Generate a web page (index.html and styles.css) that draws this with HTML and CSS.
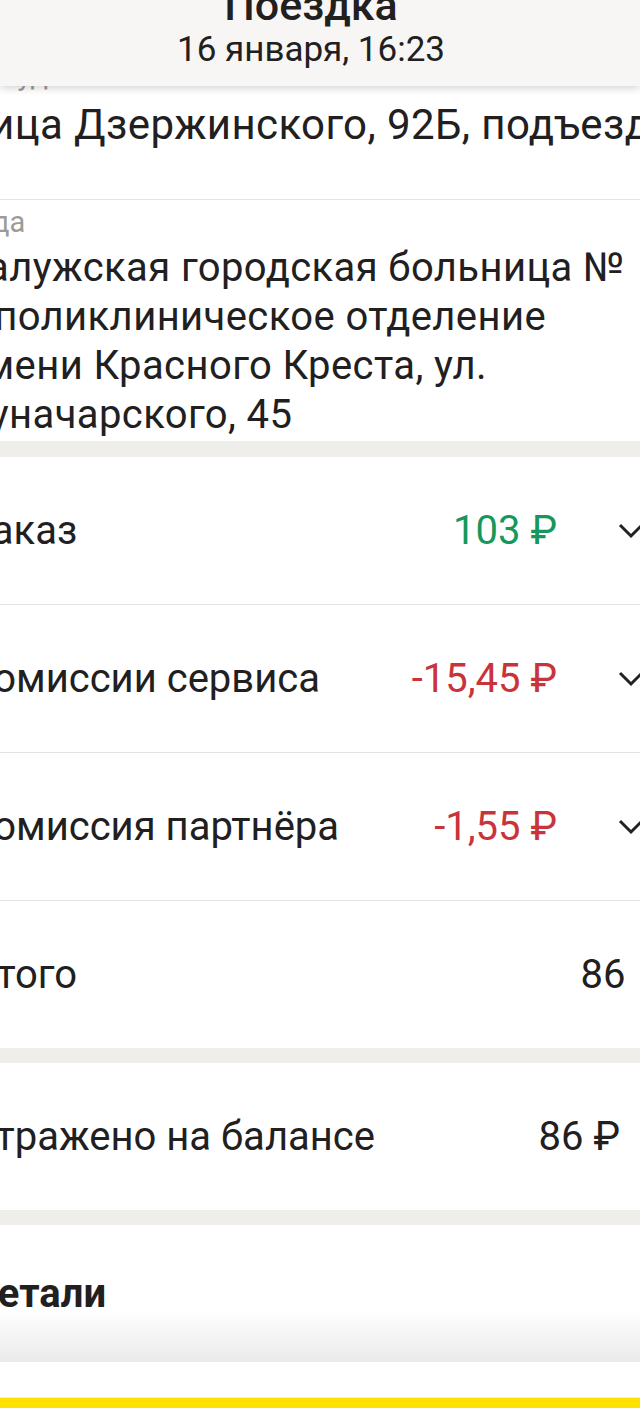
FILE: index.html
```html
<!DOCTYPE html>
<html lang="ru">
<head>
    <meta charset="UTF-8">
    <meta name="viewport" content="width=device-width, initial-scale=1.0">
    <title>Поездка</title>
    <link rel="stylesheet" href="styles.css">
</head>
<body>
    <div class="header">
        <div class="title">Поездка</div>
        <div class="date">16 января, 16:23</div>
    </div>

    <div class="sheet">
        <div class="address from">
            <div class="caption">Откуда</div>
            <div class="place">
                <span class="line">улица Дзержинского, 92Б, подъезд 1</span>
            </div>
        </div>
        <div class="address to">
            <div class="caption">Куда</div>
            <div class="place">
                <span class="line">Калужская городская больница №</span>
                <span class="line">5 поликлиническое отделение</span>
                <span class="line">имени Красного Креста, ул.</span>
                <span class="line">Луначарского, 45</span>
            </div>
        </div>

        <div class="gap first"></div>

        <div class="row bordered">
            <span class="label">Заказ</span>
            <span class="value plus">103 ₽</span>
            <svg class="chev" width="26" height="16" viewBox="0 0 26 16"><polyline points="2,2 13,13 24,2" fill="none" stroke="#222" stroke-width="3"/></svg>
        </div>
        <div class="row bordered">
            <span class="label">Комиссии сервиса</span>
            <span class="value minus">-15,45 ₽</span>
            <svg class="chev" width="26" height="16" viewBox="0 0 26 16"><polyline points="2,2 13,13 24,2" fill="none" stroke="#222" stroke-width="3"/></svg>
        </div>
        <div class="row bordered">
            <span class="label">Комиссия партнёра</span>
            <span class="value minus">-1,55 ₽</span>
            <svg class="chev" width="26" height="16" viewBox="0 0 26 16"><polyline points="2,2 13,13 24,2" fill="none" stroke="#222" stroke-width="3"/></svg>
        </div>
        <div class="row total">
            <span class="label">Итого</span>
            <span class="value">86<span class="cur">₽</span></span>
        </div>

        <div class="gap"></div>

        <div class="row">
            <span class="label">Отражено на балансе</span>
            <span class="value balance">86 ₽</span>
        </div>

        <div class="gap"></div>

        <div class="details">Детали</div>
        <div class="spacer"></div>
        <div class="action"></div>
    </div>
</body>
</html>
```

FILE: styles.css
```css
body {
    margin: 0;
    overflow: hidden;
    background: #fff;
    font-family: Roboto, "Noto Sans", sans-serif;
    color: #21201f;
}
.header {
    position: relative;
    z-index: 2;
    height: 86px;
    box-sizing: border-box;
    padding-right: 18px;
    display: flex;
    flex-direction: column;
    align-items: center;
    background: #f7f6f4;
    box-shadow: 0 2px 8px rgba(0, 0, 0, 0.18);
    overflow: hidden;
}
.title {
    margin-top: -17px;
    font-size: 43px;
    line-height: 44px;
    font-weight: 500;
}
.date {
    margin-top: 3px;
    font-size: 35px;
    line-height: 40px;
}
.sheet {
    margin-top: -29px;
    margin-left: -32px;
    width: 712px;
}
.address {
    padding: 6px 0 2px 0;
}
.address.from {
    padding: 2px 0 50px 0;
    border-bottom: 1px solid #e4e4e4;
}
.address.from .place {
    margin-left: -22px;
    margin-top: 9px;
    font-size: 42px;
    letter-spacing: 0.4px;
}
.address.to {
    margin-left: -7px;
}
.address.to .place {
    letter-spacing: 0.4px;
}
.caption {
    font-size: 29px;
    line-height: 32px;
    color: #9c9b99;
}
.place {
    margin-top: 5px;
    font-size: 40px;
    line-height: 49px;
}
.line {
    display: block;
    white-space: nowrap;
}
.gap {
    height: 15px;
    background: #efeeea;
}
.gap.first {
    height: 16px;
}
.row {
    height: 147px;
    padding-right: 44px;
    display: flex;
    align-items: center;
    font-size: 40px;
    white-space: nowrap;
}
.row.bordered {
    padding-right: 36px;
    border-bottom: 1px solid #e2e2e2;
}
.row.total {
    padding-right: 0;
}
.cur {
    margin-left: 28px;
}
.label {
    flex: 1;
}
.value.plus {
    color: #17975a;
}
.value.minus {
    color: #c9343b;
}
.value.balance {
    margin-right: 16px;
}
.row .chev {
    margin-left: 61px;
}
.details {
    height: 137px;
    display: flex;
    align-items: center;
    font-size: 40px;
    font-weight: 700;
    background: linear-gradient(to bottom, #fff 62%, #eaeaea 100%);
}
.spacer {
    height: 35px;
}
.action {
    height: 11px;
    background: #ffe100;
    border-top: 1px solid #fff2a0;
}
```
